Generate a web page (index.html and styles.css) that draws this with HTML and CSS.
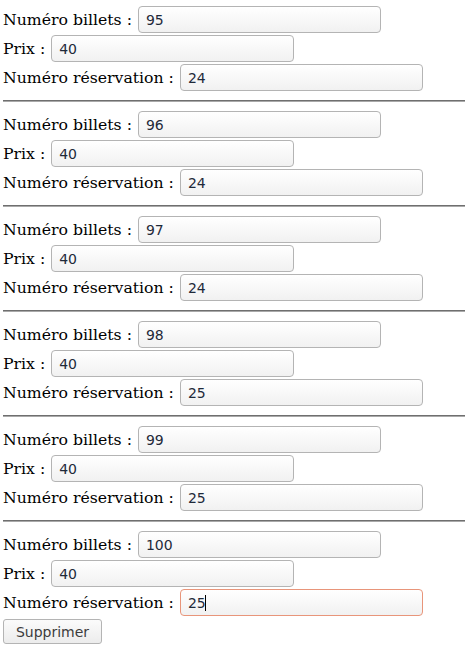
FILE: index.html
```html
<!DOCTYPE html>
<html lang="fr">
<head>
<meta charset="utf-8">
<title>Billets</title>
<link rel="stylesheet" href="styles.css">
</head>
<body>
<form class="list">
  <div class="ticket">
    <div class="row"><label>Numéro billets :</label><input class="field" type="text" value="95"></div>
    <div class="row"><label>Prix :</label><input class="field" type="text" value="40"></div>
    <div class="row"><label>Numéro réservation :</label><input class="field" type="text" value="24"></div>
  </div>
  <hr class="sep">
  <div class="ticket">
    <div class="row"><label>Numéro billets :</label><input class="field" type="text" value="96"></div>
    <div class="row"><label>Prix :</label><input class="field" type="text" value="40"></div>
    <div class="row"><label>Numéro réservation :</label><input class="field" type="text" value="24"></div>
  </div>
  <hr class="sep">
  <div class="ticket">
    <div class="row"><label>Numéro billets :</label><input class="field" type="text" value="97"></div>
    <div class="row"><label>Prix :</label><input class="field" type="text" value="40"></div>
    <div class="row"><label>Numéro réservation :</label><input class="field" type="text" value="24"></div>
  </div>
  <hr class="sep">
  <div class="ticket">
    <div class="row"><label>Numéro billets :</label><input class="field" type="text" value="98"></div>
    <div class="row"><label>Prix :</label><input class="field" type="text" value="40"></div>
    <div class="row"><label>Numéro réservation :</label><input class="field" type="text" value="25"></div>
  </div>
  <hr class="sep">
  <div class="ticket">
    <div class="row"><label>Numéro billets :</label><input class="field" type="text" value="99"></div>
    <div class="row"><label>Prix :</label><input class="field" type="text" value="40"></div>
    <div class="row"><label>Numéro réservation :</label><input class="field" type="text" value="25"></div>
  </div>
  <hr class="sep">
  <div class="ticket">
    <div class="row"><label>Numéro billets :</label><input class="field" type="text" value="100"></div>
    <div class="row"><label>Prix :</label><input class="field" type="text" value="40"></div>
    <div class="row"><label>Numéro réservation :</label><span class="caret-wrap"><input class="field field-active" type="text" value="25"></span></div>
  </div>
  <button class="btn" type="button">Supprimer</button>
</form>
</body>
</html>
```

FILE: styles.css
```css
html, body {
  margin: 0;
  padding: 0;
  background: #ffffff;
}
body {
  padding: 5px 0 0 3px;
  font-family: "DejaVu Serif", serif;
  font-size: 15.7px;
  color: #000;
}
.list {
  margin: 0;
}
.ticket {
  display: flex;
  flex-direction: column;
}
.row {
  display: flex;
  align-items: center;
  height: 29px;
  gap: 6px;
}
.row label {
  white-space: nowrap;
}
.field {
  box-sizing: border-box;
  width: 243px;
  height: 27px;
  margin: 0;
  padding: 0 7px;
  border: 1px solid #b4b4b4;
  border-radius: 4px;
  background: linear-gradient(#ffffff, #f1f1f1);
  font-family: "DejaVu Sans", sans-serif;
  font-size: 14px;
  color: #1f2a3a;
  outline: none;
}
.field-active {
  border-color: #e8957a;
}
.caret-wrap {
  position: relative;
  display: block;
  height: 27px;
}
.caret-wrap::after {
  content: "";
  position: absolute;
  left: 25px;
  top: 6px;
  width: 1px;
  height: 16px;
  background: #000;
}
.sep {
  height: 0;
  margin: 8px 0;
  border: 0;
  border-top: 1px solid #6f6f6f;
  border-bottom: 1px solid #a9a9a9;
}
.btn {
  display: block;
  box-sizing: border-box;
  margin: 2px 0 0 0;
  width: 99px;
  height: 25px;
  padding: 0;
  border: 1px solid #b4b4b4;
  border-radius: 3px;
  background: linear-gradient(#fbfbfb, #ececec);
  font-family: "DejaVu Sans", sans-serif;
  font-size: 14px;
  color: #3c3c3c;
}
```
